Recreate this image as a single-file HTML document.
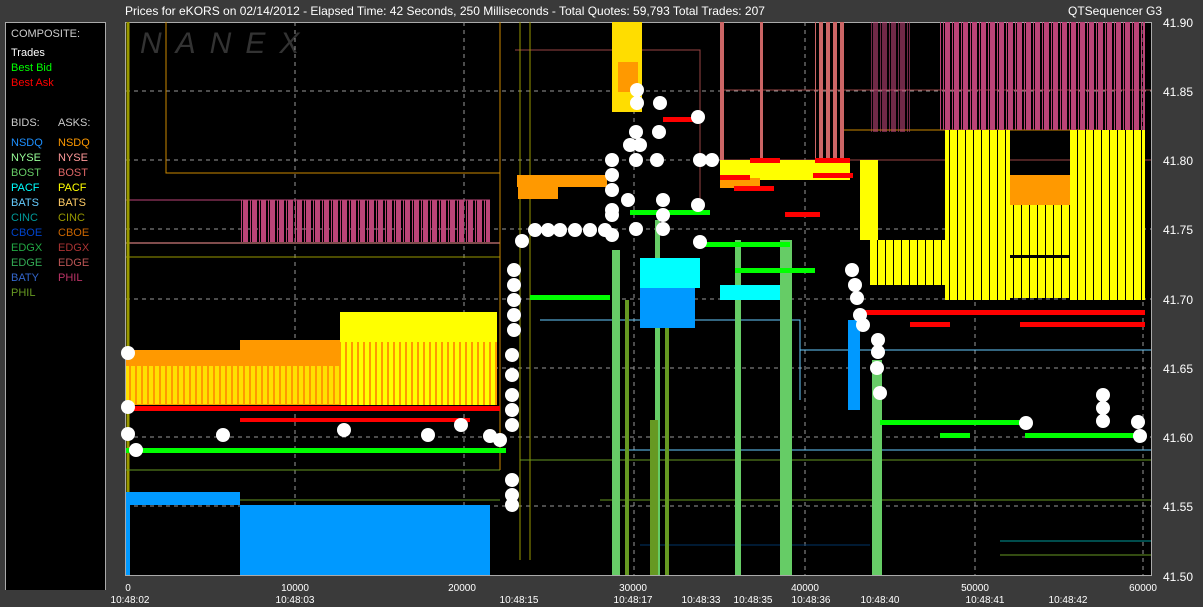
<!DOCTYPE html>
<html><head><meta charset="utf-8"><style>
body{margin:0;background:#3a3a3a;width:1203px;height:607px;overflow:hidden;font-family:"Liberation Sans",sans-serif}
svg{position:absolute;left:0;top:0}
</style></head><body>
<svg width="1203" height="607" xmlns="http://www.w3.org/2000/svg" font-family="Liberation Sans, sans-serif">
<defs>
<pattern id="pp" width="9" height="10" patternUnits="userSpaceOnUse"><rect width="5" height="10" fill="#b47"/><rect x="7" width="1" height="10" fill="#b47"/></pattern>
<pattern id="pk" width="7" height="10" patternUnits="userSpaceOnUse"><rect width="4" height="10" fill="#c66"/></pattern>
<pattern id="yo" width="6" height="10" patternUnits="userSpaceOnUse"><rect width="6" height="10" fill="#ff0"/><rect x="3" width="2" height="10" fill="#f90"/></pattern>
<pattern id="yb" width="8" height="10" patternUnits="userSpaceOnUse"><rect width="8" height="10" fill="#ff0"/><rect x="5" width="1" height="10" fill="#000"/></pattern>
</defs>
<rect width="1203" height="607" fill="#3a3a3a"/>
<text x="125" y="15" fill="#fff" font-size="12">Prices for  eKORS  on  02/14/2012  -  Elapsed Time: 42 Seconds, 250 Milliseconds  -  Total Quotes: 59,793  Total Trades: 207</text>
<text x="1068" y="15" fill="#fff" font-size="12">QTSequencer G3</text>
<rect x="5.5" y="22.5" width="100" height="590" fill="#000" stroke="#aaa"/>
<g font-size="11">
<text x="11" y="37" fill="#ccc">COMPOSITE:</text>
<text x="11" y="56" fill="#fff">Trades</text>
<text x="11" y="71" fill="#0f0">Best Bid</text>
<text x="11" y="86" fill="#f00">Best Ask</text>
<text x="11" y="126" fill="#ccc">BIDS:</text><text x="58" y="126" fill="#ccc">ASKS:</text>
<text x="11" y="146" fill="#1e90ff">NSDQ</text><text x="58" y="146" fill="#f90">NSDQ</text>
<text x="11" y="161" fill="#9f9">NYSE</text><text x="58" y="161" fill="#f99">NYSE</text>
<text x="11" y="176" fill="#6c6">BOST</text><text x="58" y="176" fill="#d66">BOST</text>
<text x="11" y="191" fill="#0ff">PACF</text><text x="58" y="191" fill="#ff0">PACF</text>
<text x="11" y="206" fill="#6cf">BATS</text><text x="58" y="206" fill="#fc6">BATS</text>
<text x="11" y="221" fill="#099">CINC</text><text x="58" y="221" fill="#990">CINC</text>
<text x="11" y="236" fill="#04c">CBOE</text><text x="58" y="236" fill="#c60">CBOE</text>
<text x="11" y="251" fill="#2a4">EDGX</text><text x="58" y="251" fill="#a33">EDGX</text>
<text x="11" y="266" fill="#3a5">EDGE</text><text x="58" y="266" fill="#b55">EDGE</text>
<text x="11" y="281" fill="#36c">BATY</text><text x="58" y="281" fill="#b36">PHIL</text>
<text x="11" y="296" fill="#692">PHIL</text>
</g>
<rect x="125.5" y="22.5" width="1026" height="553" fill="#000" stroke="#aaa"/>
<text x="140" y="53" fill="#333" font-size="30" font-style="italic" letter-spacing="14">NANEX</text>
<g stroke="#999" stroke-dasharray="4,4" stroke-width="1">
<path d="M126 91H1151M126 160H1151M126 229H1151M126 299H1151M126 368H1151M126 437H1151M126 506H1151"/>
<path d="M295 22V575M464 22V575M634 22V575M805 22V575M975 22V575M1143 22V575"/>
</g>
<g fill="none" stroke-width="1">
<path d="M166 22V173H500" stroke="#c80"/>
<path d="M126 200H490" stroke="#b47"/>
<path d="M126 243H500" stroke="#f99"/>
<path d="M126 257H500" stroke="#990"/>
<path d="M515 50H700V200" stroke="#944"/>
<path d="M500 22V470" stroke="#c80"/>
<path d="M520 22V560M530 22V560" stroke="#990"/>
<path d="M128 22V575" stroke="#990" stroke-width="3"/>
<path d="M720 90H1151M720 160H1151" stroke="#944"/>
<path d="M840 130H1100" stroke="#c80"/>
<path d="M520 460H1151M600 500H1151" stroke="#692"/>
<path d="M540 320H800V400M800 350H1151M620 450H1151" stroke="#6cf"/>
<path d="M126 470H500M126 500H500" stroke="#692"/>
<path d="M1000 555H1151" stroke="#692"/>
<path d="M1000 541H1151" stroke="#099"/>
<path d="M640 545H870" stroke="#036"/>
</g>
<g fill="#6c6">
<rect x="612" y="250" width="8" height="325"/>
<rect x="735" y="240" width="6" height="335"/>
<rect x="780" y="240" width="12" height="335"/>
<rect x="872" y="360" width="10" height="215"/>
<rect x="655" y="220" width="5" height="355"/>
</g>
<g fill="#692">
<rect x="650" y="420" width="8" height="155"/><rect x="625" y="300" width="4" height="275"/><rect x="665" y="280" width="4" height="295"/>
</g>
<rect x="240" y="200" width="250" height="42" fill="url(#pp)"/>
<rect x="126" y="350" width="114" height="55" fill="#f90"/>
<rect x="240" y="340" width="100" height="65" fill="#f90"/>
<rect x="126" y="366" width="214" height="38" fill="url(#yo)" opacity="0.7"/>
<rect x="340" y="312" width="157" height="93" fill="url(#yo)"/>
<rect x="340" y="312" width="157" height="30" fill="#ff0"/>
<rect x="130" y="406" width="370" height="5" fill="#f00"/>
<rect x="240" y="418" width="230" height="4" fill="#f00"/>
<rect x="126" y="492" width="114" height="13" fill="#09f"/>
<rect x="240" y="505" width="250" height="70" fill="#09f"/>
<rect x="126" y="505" width="4" height="70" fill="#09f"/>
<rect x="126" y="448" width="380" height="5" fill="#0f0"/>
<rect x="612" y="22" width="30" height="90" fill="#fd0"/>
<rect x="618" y="62" width="20" height="30" fill="#f90"/>
<rect x="517" y="175" width="90" height="12" fill="#f90"/>
<rect x="518" y="185" width="40" height="14" fill="#f90"/>
<rect x="640" y="258" width="60" height="30" fill="#0ff"/>
<rect x="640" y="288" width="55" height="40" fill="#09f"/>
<rect x="720" y="285" width="60" height="15" fill="#0ff"/>
<rect x="848" y="320" width="12" height="90" fill="#09f"/>
<rect x="530" y="295" width="80" height="5" fill="#0f0"/>
<rect x="630" y="210" width="80" height="5" fill="#0f0"/>
<rect x="735" y="268" width="80" height="5" fill="#0f0"/>
<rect x="700" y="242" width="90" height="5" fill="#0f0"/>
<rect x="880" y="420" width="90" height="5" fill="#0f0"/>
<rect x="970" y="420" width="60" height="5" fill="#0f0"/>
<rect x="940" y="433" width="30" height="5" fill="#0f0"/>
<rect x="1025" y="433" width="120" height="5" fill="#0f0"/>
<rect x="815" y="22" width="30" height="140" fill="url(#pk)"/>
<rect x="720" y="22" width="4" height="140" fill="#c66"/>
<rect x="760" y="22" width="3" height="140" fill="#c66"/>
<rect x="940" y="22" width="205" height="108" fill="url(#pp)"/>
<rect x="870" y="22" width="40" height="110" fill="url(#pp)" opacity="0.6"/>
<rect x="720" y="160" width="130" height="20" fill="#ff0"/>
<rect x="720" y="178" width="40" height="10" fill="#f90"/>
<rect x="870" y="240" width="75" height="45" fill="url(#yb)"/>
<rect x="945" y="130" width="65" height="170" fill="url(#yb)"/>
<rect x="1010" y="175" width="60" height="30" fill="#f90"/>
<rect x="1010" y="205" width="60" height="50" fill="url(#yb)"/>
<rect x="1070" y="130" width="75" height="170" fill="url(#yb)"/>
<rect x="1010" y="258" width="60" height="40" fill="url(#yb)"/>
<rect x="860" y="160" width="18" height="80" fill="#ff0"/>
<g fill="#f00">
<rect x="862" y="310" width="283" height="5"/>
<rect x="910" y="322" width="40" height="5"/>
<rect x="1020" y="322" width="125" height="5"/>
<rect x="720" y="175" width="30" height="5"/>
<rect x="750" y="158" width="30" height="5"/>
<rect x="785" y="212" width="35" height="5"/>
<rect x="815" y="158" width="35" height="5"/>
<rect x="813" y="173" width="40" height="5"/>
<rect x="663" y="117" width="35" height="5"/>
<rect x="734" y="186" width="40" height="5"/>
</g>
<g fill="#fff">
<circle cx="128" cy="353" r="7"/><circle cx="128" cy="407" r="7"/><circle cx="128" cy="434" r="7"/>
<circle cx="136" cy="450" r="7"/><circle cx="223" cy="435" r="7"/><circle cx="344" cy="430" r="7"/><circle cx="428" cy="435" r="7"/><circle cx="461" cy="425" r="7"/>
<circle cx="490" cy="436" r="7"/><circle cx="500" cy="440" r="7"/>
<circle cx="512" cy="355" r="7"/><circle cx="512" cy="375" r="7"/><circle cx="512" cy="395" r="7"/><circle cx="512" cy="410" r="7"/><circle cx="512" cy="425" r="7"/><circle cx="512" cy="480" r="7"/><circle cx="512" cy="495" r="7"/><circle cx="512" cy="505" r="7"/>
<circle cx="514" cy="270" r="7"/><circle cx="514" cy="285" r="7"/><circle cx="514" cy="300" r="7"/><circle cx="514" cy="315" r="7"/><circle cx="514" cy="330" r="7"/>
<circle cx="522" cy="241" r="7"/><circle cx="535" cy="230" r="7"/><circle cx="548" cy="230" r="7"/><circle cx="560" cy="230" r="7"/><circle cx="575" cy="230" r="7"/><circle cx="590" cy="230" r="7"/><circle cx="605" cy="230" r="7"/>
<circle cx="612" cy="160" r="7"/><circle cx="612" cy="175" r="7"/><circle cx="612" cy="190" r="7"/><circle cx="612" cy="210" r="7"/><circle cx="612" cy="215" r="7"/><circle cx="612" cy="235" r="7"/>
<circle cx="637" cy="90" r="7"/><circle cx="637" cy="103" r="7"/><circle cx="636" cy="132" r="7"/><circle cx="630" cy="145" r="7"/><circle cx="640" cy="145" r="7"/><circle cx="636" cy="160" r="7"/>
<circle cx="660" cy="103" r="7"/><circle cx="659" cy="132" r="7"/><circle cx="657" cy="160" r="7"/><circle cx="628" cy="200" r="7"/><circle cx="636" cy="229" r="7"/>
<circle cx="663" cy="200" r="7"/><circle cx="663" cy="215" r="7"/><circle cx="663" cy="229" r="7"/><circle cx="698" cy="117" r="7"/><circle cx="700" cy="160" r="7"/><circle cx="712" cy="160" r="7"/><circle cx="698" cy="205" r="7"/><circle cx="700" cy="242" r="7"/>
<circle cx="852" cy="270" r="7"/><circle cx="855" cy="285" r="7"/><circle cx="857" cy="298" r="7"/><circle cx="860" cy="315" r="7"/><circle cx="863" cy="325" r="7"/><circle cx="878" cy="340" r="7"/><circle cx="878" cy="352" r="7"/><circle cx="877" cy="368" r="7"/><circle cx="880" cy="393" r="7"/>
<circle cx="1026" cy="423" r="7"/><circle cx="1103" cy="395" r="7"/><circle cx="1103" cy="408" r="7"/><circle cx="1103" cy="421" r="7"/><circle cx="1138" cy="422" r="7"/><circle cx="1140" cy="436" r="7"/>
</g>
<g fill="#fff" font-size="12">
<text x="1163" y="27">41.90</text><text x="1163" y="96">41.85</text><text x="1163" y="165">41.80</text><text x="1163" y="234">41.75</text><text x="1163" y="304">41.70</text><text x="1163" y="373">41.65</text><text x="1163" y="442">41.60</text><text x="1163" y="511">41.55</text><text x="1163" y="581">41.50</text>
</g>
<g fill="#fff" font-size="10" text-anchor="middle">
<text x="128" y="591">0</text><text x="295" y="591">10000</text><text x="462" y="591">20000</text><text x="633" y="591">30000</text><text x="805" y="591">40000</text><text x="975" y="591">50000</text><text x="1143" y="591">60000</text>
<text x="130" y="603">10:48:02</text><text x="295" y="603">10:48:03</text><text x="519" y="603">10:48:15</text><text x="633" y="603">10:48:17</text><text x="701" y="603">10:48:33</text><text x="753" y="603">10:48:35</text><text x="811" y="603">10:48:36</text><text x="880" y="603">10:48:40</text><text x="985" y="603">10:48:41</text><text x="1068" y="603">10:48:42</text>
</g>
<rect x="5" y="590" width="101" height="17" fill="#3a3a3a"/>
</svg>
</body></html>
